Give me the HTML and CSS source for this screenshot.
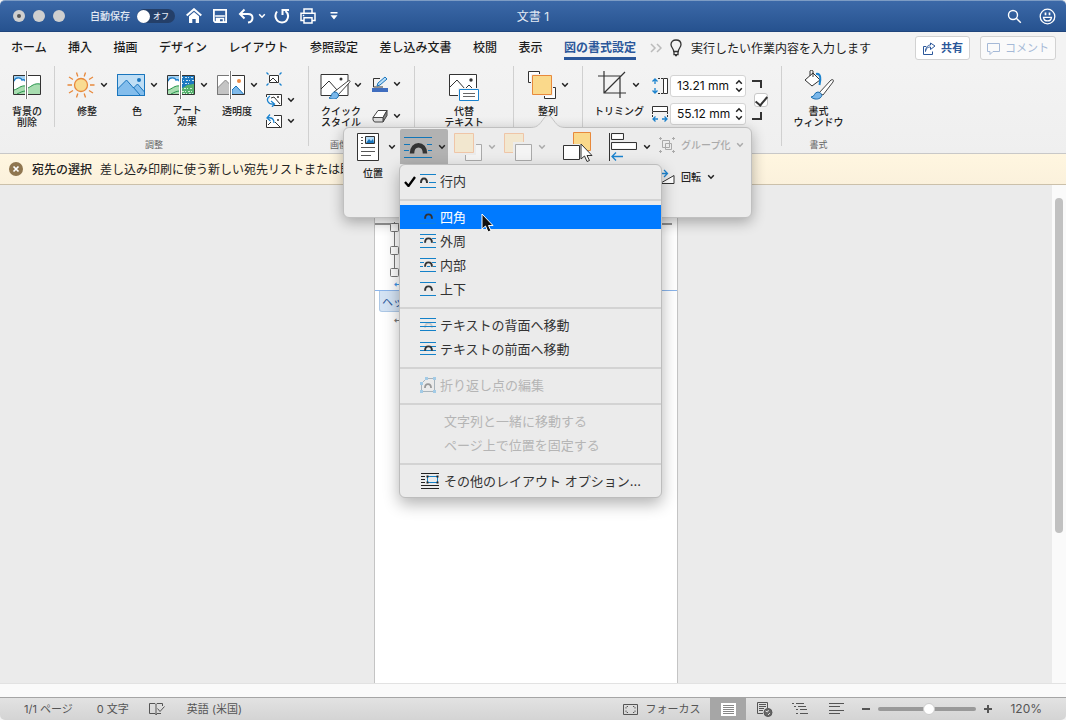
FILE: index.html
```html
<!DOCTYPE html>
<html lang="ja">
<head>
<meta charset="utf-8">
<title>文書 1</title>
<link rel="stylesheet" href="styles.css">
</head>
<body>
<svg class="defs" aria-hidden="true">
  <symbol id="chev" viewBox="0 0 8 6"><path d="M1.200 1.200 4 4.200 6.800 1.200" fill="none" stroke="currentColor" stroke-width="1.500"/></symbol>
  <symbol id="arch" viewBox="0 0 10 6"><path d="M1.200 6C1.200-.4 8.800-.4 8.800 6" fill="none" stroke="currentColor" stroke-width="2.200"/></symbol>
  <symbol id="scene" viewBox="0 0 28 28"><path d="M.5 4.500h27v19H.5z" fill="#fff"/><path d="M1 5h12v10H1z" fill="#a5d2f3"/><path d="M1 12c1-6 7-6 8-2 2-1 4 1 4 3v6H1z" fill="#fff"/><path d="M1 10c1-4 7-4 8-1 2-1 3 0 4 2" fill="none" stroke="#1f7fc9" stroke-width="1.300"/><path d="M1 19c4-1 7-5 12-4v9H1zM15 17c4-2 6-5 12-4v11H15z" fill="#a8ddb0"/><path d="M1 19c4-1 7-5 12-4M15 17c4-2 6-5 12-4M4 23c4-2 6-3 9-3" fill="none" stroke="#26944c"/></symbol>
</svg>

<header class="titlebar">
  <div class="lights"><button class="light edited" aria-label="閉じる"></button><button class="light" aria-label="しまう"></button><button class="light" aria-label="拡大"></button></div>
  <label class="autosave"><span>自動保存</span><span class="switch"><input type="checkbox" role="switch"><span class="knob"></span><span class="off">オフ</span></span></label>
  <div class="quick">
    <button aria-label="ホーム"><svg width="16" height="16" viewBox="0 0 16 16" fill="none" stroke="#fff"><path d="M.7 7.500 8 1.200 15.300 7.500" stroke-width="2"/><path d="M3 8.200 8 4l5 4.200V15H9.700v-4H6.300v4H3z" fill="#fff" stroke="none"/></svg></button>
    <button aria-label="保存"><svg width="16" height="16" viewBox="0 0 16 16" fill="none" stroke="#fff" stroke-width="1.800"><path d="M1.900 1.900h12.200v12.200H3.200L1.900 12.800z"/><path d="M3.200 8h9.600M4.500 14v-3.500h7V14" stroke-width="1.500"/><path d="M5 11h3v3H5z" fill="#fff" stroke="none"/></svg></button>
    <button aria-label="元に戻す" class="undo"><svg width="17" height="16" viewBox="0 0 17 16" fill="none" stroke="#fff" stroke-width="2"><path d="M6.500 1.500 2 6l4.500 4.500M2.500 6H10c6 0 6 7.500 0 8.500"/></svg><svg class="chev"><use href="#chev"/></svg></button>
    <button aria-label="やり直し"><svg width="16" height="16" viewBox="0 0 16 16" fill="none" stroke="#fff" stroke-width="2"><path d="M3 3.500C-.5 8 2.500 14.500 8 14.500S16.500 7 11.500 3M8.500 7V2H15"/></svg></button>
    <button aria-label="印刷"><svg width="16" height="16" viewBox="0 0 16 16" fill="none" stroke="#fff" stroke-width="1.500"><path d="M4 5V1h8v4M3.500 12.500H1V5.300h14v7.200h-2.500M4 9.800h8V15H4z"/><path d="M2.800 7.500h1.500"/></svg></button>
    <button aria-label="クイックアクセスのカスタマイズ"><svg width="8" height="8" viewBox="0 0 8 8" fill="#fff"><path d="M.5 0h7v1.500h-7zM.5 3.200h7L4 7.500z"/></svg></button>
  </div>
  <h1 class="doc-title">文書 1</h1>
  <div class="title-tools">
    <button aria-label="検索"><svg width="15" height="15" viewBox="0 0 15 15" fill="none" stroke="#fff" stroke-width="1.400"><circle cx="6" cy="6" r="4.500"/><path d="m9.300 9.300 4.500 4.500"/></svg></button>
    <button aria-label="フィードバック"><svg width="17" height="17" viewBox="0 0 17 17" fill="none" stroke="#fff" stroke-width="1.300"><circle cx="8.500" cy="8.500" r="7.300"/><path d="M4.500 9.300c.6 4.800 7.400 4.800 8 0z"/><path d="M6.500 4.500v2.800M10.500 4.500v2.800" stroke-width="1.700"/></svg></button>
  </div>
</header>

<nav class="tabs">
  <div class="tab-list">
    <button>ホーム</button><button>挿入</button><button>描画</button><button>デザイン</button><button>レイアウト</button><button>参照設定</button><button>差し込み文書</button><button>校閲</button><button>表示</button><button class="active">図の書式設定</button>
  </div>
  <svg width="12" height="10" viewBox="0 0 12 10" fill="none" stroke="#bbb" stroke-width="1.500"><path d="m1 1 4 4-4 4M7 1l4 4-4 4"/></svg>
  <button class="tell"><svg width="12" height="18" viewBox="0 0 12 18" fill="none" stroke="#333" stroke-width="1.300"><path d="M3.700 12.500C3.700 9.500 1 8.500 1 5.500 1 2.800 3 1 6 1s5 1.800 5 4.500c0 3-2.700 4-2.700 7zM4 12.500v3.200h4v-3.200M5 16.500h2"/></svg><span>実行したい作業内容を入力します</span></button>
  <div class="tab-actions">
    <button class="share"><svg width="14" height="13" viewBox="0 0 14 13" fill="none" stroke="currentColor"><path d="M4 4.500H1.500v8h9V9.500M3.500 9.500c.5-3.500 2.500-4.500 5-4.500V7.500L13 4 8.500 1v2C5.500 3 3.700 5.500 3.500 9.500z"/></svg>共有</button>
    <button class="comment" disabled><svg width="13" height="13" viewBox="0 0 13 13" fill="none" stroke="currentColor"><path d="M.5 1.500h12v8H6l-3 3v-3H.5z"/></svg>コメント</button>
  </div>
</nav>

<section class="ribbon" aria-label="図の書式設定">
  <div class="group adjust">
    <div class="tools">
      <button class="tool remove-bg"><span class="pic"><svg width="28" height="28" viewBox="0 0 28 28" fill="none"><use href="#scene"/><path d="M.5 4.500h27v19H.5z" stroke="#333"/><path d="M13.500 0v28" stroke="#fff" stroke-width="3"/><path d="M13.500 0v28" stroke="#777"/></svg></span><span>背景の<br>削除</span></button>
      <div class="adjust-set">
        <button class="tool"><span class="pic"><svg width="28" height="28" viewBox="0 0 28 28" fill="none" stroke="#e8893c" stroke-width="1.300"><circle cx="14" cy="14" r="6.500" fill="#f9dc92"/><path d="M9.500 1.500l1.300 4M18.500 1.500l-1.300 4M2 6l4 2.500M26 6l-4 2.500M.5 14H5M23 14h4.500M2 22l4-2.500M26 22l-4-2.500M9.500 26.500l1.300-4M18.500 26.500l-1.300-4"/></svg><svg class="chev"><use href="#chev"/></svg></span><span>修整</span></button>
        <button class="tool"><span class="pic"><svg width="28" height="22" viewBox="0 0 28 22" fill="none" stroke="#1975bd"><path d="M.5.500h27v21H.5z" fill="#bfdef5"/><path d="m.5 15 9-9 7 8 4-4 7 8v3.500H.5z" fill="#83bdec"/><path d="m16 13 7 8"/><circle cx="22" cy="6" r="2" fill="#1975bd" stroke="none"/><path d="M.5.500h27v21H.5z"/></svg><svg class="chev"><use href="#chev"/></svg></span><span>色</span></button>
        <button class="tool"><span class="pic"><svg width="28" height="28" viewBox="0 0 28 28" fill="none"><use href="#scene"/><path d="M15 4h12v9l-12 4z" fill="#1c79c0"/><path d="M15 6.500h12M16 9.500h11M15 12.500h8" stroke="#cfe6f7" stroke-dasharray="1 2 2 1"/><path d="M15 18l5-4 7-1v11H15z" fill="#55b06c"/><path d="M17 17.500h9M15 20.500h12M16 22.500h11" stroke="#d2efd8" stroke-dasharray="2 1 1 2"/><path d="M.5 4.500h27v19H.5z" stroke="#333"/><path d="M13.500 0v28" stroke="#fff" stroke-width="3"/><path d="M13.500 0v28" stroke="#777"/></svg><svg class="chev"><use href="#chev"/></svg></span><span>アート<br>効果</span></button>
        <button class="tool"><span class="pic"><svg width="28" height="28" viewBox="0 0 28 28" fill="none"><path d="M.5 4.500h27v19H.5z" fill="#fff"/><path d="m.5 17 8-8 5 5v9.500H.5z" fill="#c4c4c4" stroke="#888"/><path d="M15 19l4-4 8 8.500H15z" fill="#7fb9e9" stroke="#1975bd"/><circle cx="22" cy="10" r="2" fill="#ed8b45"/><path d="M13 4.500H.5v19H13" stroke="#777"/><path d="M14 4.500h13.500v19H14" stroke="#333"/><path d="M13.500 0v28" stroke="#fff" stroke-width="3"/><path d="M13.500 0v28" stroke="#777"/></svg><svg class="chev"><use href="#chev"/></svg></span><span>透明度</span></button>
        <div class="minis three">
          <button aria-label="図の圧縮"><svg width="16" height="14" viewBox="0 0 16 14" fill="none"><path d="M3.500 3.500h9v7h-9z" fill="#fff" stroke="#333"/><path d="m4 9 3-3 4 4" stroke="#333"/><path d="m.5.500 2 2M15.500.500l-2 2M.5 13.500l2-2M15.500 13.500l-2-2" stroke="#1b83cf" stroke-width="1.300"/></svg></button>
          <button aria-label="図の変更"><svg width="16" height="14" viewBox="0 0 16 14" fill="none"><path d="M.5 1.500h15v11H.5z" fill="#fff" stroke="#333"/><path d="m5 5 3-1 6 7" stroke="#333"/><circle cx="12" cy="4" r="1" fill="#333"/><path d="M0 4h4v10H0zM3 10h5v4H3z" fill="#f2f2f2"/><path d="M4 3C-1 6 2 12 8 11M5 8l3.500 3L6 14" stroke="#1b83cf" stroke-width="1.300"/></svg><svg class="chev"><use href="#chev"/></svg></button>
          <button aria-label="図のリセット"><svg width="16" height="14" viewBox="0 0 16 14" fill="none"><path d="M.5 1.500h15v12H.5z" fill="#fff" stroke="#333"/><path d="m2 11 3-3m4 0 5 5" stroke="#333"/><circle cx="12" cy="6" r="1" fill="#333"/><path d="M0 0h8v6H0z" fill="#f2f2f2"/><path d="M4 .5 1 4l3.500 3M1 4c5-1 7 1 7 5" stroke="#1b83cf" stroke-width="1.300"/></svg><svg class="chev"><use href="#chev"/></svg></button>
        </div>
      </div>
    </div>
    <div class="caption">調整</div>
  </div>
  <div class="group styles">
    <div class="tools">
      <button class="tool"><span class="pic"><svg width="31" height="28" viewBox="0 0 31 28" fill="none"><path d="M1 3.500h27v21H1z" fill="#fff" stroke="#333"/><path d="m1 18 8-8 8 9" stroke="#333"/><circle cx="21" cy="8" r="1.500" fill="#333"/><path d="m14 21 14-11c2-1 3 0 1 2L18 24z" fill="#fff" stroke="#444"/><path d="M9 27c3-1 2-6 6-6 3 0 5 4 2 6-2 2-6 1-8 0z" fill="#7ab7ea" stroke="#176cae"/></svg><svg class="chev"><use href="#chev"/></svg></span><span>クイック<br>スタイル</span></button>
      <div class="minis two">
        <button aria-label="図の枠線"><svg width="16" height="16" viewBox="0 0 16 16" fill="none"><path d="M11 11H1.500V2.500H8" stroke="#333"/><path d="m5 10 1-3 7-6 2 2-7 6z" fill="#b9ddf7" stroke="#1975bd"/><path d="M0 12h16v4H0z" fill="#3f6dbf"/></svg><svg class="chev"><use href="#chev"/></svg></button>
        <button aria-label="図の効果"><svg width="16" height="14" viewBox="0 0 16 14" fill="#fff" stroke="#444" stroke-linejoin="round"><path d="M6 1.500h9l-4 7H1z"/><path d="m11 8.500 4-7v5l-4 6.500z" fill="#888"/><path d="M1 8.500h10V13H2.500L1 11z" fill="#ddd"/></svg><svg class="chev"><use href="#chev"/></svg></button>
      </div>
    </div>
    <div class="caption">画像のスタイル</div>
  </div>
  <div class="group alt">
    <div class="tools"><button class="tool"><span class="pic"><svg width="30" height="32" viewBox="0 0 30 32" fill="none"><path d="M.5 5.500h27v21H.5z" fill="#fff" stroke="#333"/><path d="m1 18 7-7 8 9 4-4 4 4" stroke="#333"/><circle cx="22" cy="11" r="1.700" fill="#333"/><path d="M9 19h21v13H9z" fill="#f2f2f2"/><path d="M10.500 20.500h19v11h-19z" fill="#fff" stroke="#1b83cf"/><path d="M14 24.500h12M14 27.500h12" stroke="#666"/></svg></span><span>代替<br>テキスト</span></button></div>
  </div>
  <div class="group arrange">
    <div class="tools"><button class="tool" aria-expanded="true"><span class="pic"><svg width="28" height="28" viewBox="0 0 28 28"><path d="M.5.500h11v11H.5zM16.500 16.500h11v11h-11z" fill="#fff" stroke="#333"/><path d="M3 3h22v22H3z" fill="#f2f2f2"/><path d="M4.500 4.500h19v19h-19z" fill="#fad98b" stroke="#e8893c"/></svg><svg class="chev"><use href="#chev"/></svg></span><span>整列</span></button></div>
  </div>
  <div class="group size">
    <div class="tools">
      <button class="tool"><span class="pic"><svg width="28" height="28" viewBox="0 0 28 28" fill="none" stroke="#333" stroke-width="1.200"><path d="M6 0v22h22M0 5h22v22M6 22 27 1"/></svg><svg class="chev"><use href="#chev"/></svg></span><span>トリミング</span></button>
      <div class="dims">
        <div class="dim"><svg width="17" height="16" viewBox="0 0 17 16" fill="none"><path d="M11.500.500h4v15h-4z" fill="#fff" stroke="#333"/><path d="M6 .5h5M6 15.500h5" stroke="#333" stroke-dasharray="2 1"/><path d="M3 1v5M3 10v5M.5 3.500 3 1l2.500 2.500M.5 12.500 3 15l2.500-2.500" stroke="#1b83cf" stroke-width="1.300"/></svg><span class="field"><input type="text" value="13.21 mm" aria-label="高さ"><span class="steps"><button aria-label="増やす"><svg class="chev up"><use href="#chev"/></svg></button><button aria-label="減らす"><svg class="chev"><use href="#chev"/></svg></button></span></span></div>
        <div class="dim"><svg width="17" height="16" viewBox="0 0 17 16" fill="none"><path d="M.5.500h15v5H.5z" fill="#fff" stroke="#333"/><path d="M.5 6v5M15.500 6v5" stroke="#333" stroke-dasharray="2 1"/><path d="M1 13h5M10 13h5M3.500 10.500 1 13l2.500 2.500M12.500 10.500 15 13l-2.500 2.500" stroke="#1b83cf" stroke-width="1.300"/></svg><span class="field"><input type="text" value="55.12 mm" aria-label="幅"><span class="steps"><button aria-label="増やす"><svg class="chev up"><use href="#chev"/></svg></button><button aria-label="減らす"><svg class="chev"><use href="#chev"/></svg></button></span></span></div>
      </div>
      <div class="lock"><svg width="10" height="8" viewBox="0 0 10 8" fill="none" stroke="#333" stroke-width="2"><path d="M0 1h9v7"/></svg><input type="checkbox" checked aria-label="縦横比の固定"><svg width="10" height="8" viewBox="0 0 10 8" fill="none" stroke="#333" stroke-width="2"><path d="M0 7h9V0"/></svg></div>
    </div>
  </div>
  <div class="group format">
    <div class="tools"><button class="tool"><span class="pic"><svg width="30" height="30" viewBox="0 0 30 30" fill="none"><path d="m1 10 8-7 7 7-8 6z" fill="#fff" stroke="#333"/><path d="M6 6V1c0-1 3-1 3 0v6" stroke="#333"/><path d="M12 4c5-1 5 5 3.500 11" stroke="#1b83cf" stroke-width="2"/><path d="m15 23 12-13c2-1 3 0 2 2L19 25z" fill="#fff" stroke="#444"/><path d="M7 27c4 0 3-5 7-5 4 1 5 4 2 6-3 2-7 1-9-1z" fill="#7ab7ea" stroke="#176cae"/></svg></span><span>書式<br>ウィンドウ</span></button></div>
    <div class="caption">書式</div>
  </div>

  <div class="popover">
    <svg class="peak" width="34" height="13" viewBox="0 0 34 13"><path d="M0 12.500c7 0 9-4 12-8 3-5 7-5 10 0 3 4 5 8 12 8v.5H0z" fill="#ececec"/><path d="M0 12.500c7 0 9-4 12-8 3-5 7-5 10 0 3 4 5 8 12 8" fill="none" stroke="#c4c4c4"/></svg>
    <div class="position"><button class="pop-tool" aria-label="オブジェクトの位置"><svg width="22" height="28" viewBox="0 0 22 28" fill="none"><path d="M.5.500h21v27H.5z" fill="#fff" stroke="#333"/><path d="M8.500 3.500h9v7h-9z" fill="#b7dcf7" stroke="#333"/><path d="m9 10 3-4 2 2 2-2 1 4z" fill="#1975bd"/><path d="M4 4.500h2M4 7.500h2M4 10.500h2M4 14.500h14M4 18.500h14M4 22.500h10" stroke="#555"/></svg><svg class="chev"><use href="#chev"/></svg></button><span>位置</span></div>
    <div class="wrap">
      <button class="pop-tool pressed" aria-label="文字列の折り返し" aria-expanded="true"><svg width="28" height="24" viewBox="0 0 28 24" fill="none"><path d="M0 2.500h28M0 9.500h6M23 9.500h5M0 15.500h5M24 15.500h4M0 22.500h28" stroke="#1176b9"/><path d="M8 18.500c0-11 13-11 13 0" stroke="#333" stroke-width="4.500"/></svg><svg class="chev"><use href="#chev"/></svg></button>
      <div class="menu" role="menu">
        <button role="menuitem"><svg class="tick" width="12" height="11" viewBox="0 0 12 11" fill="none" stroke="#000" stroke-width="2.300"><path d="m1 6 3.500 4L11 1"/></svg><svg width="16" height="14" viewBox="0 0 16 14"><path d="M0 .5h16M9 8.500h7M0 13.500h16" stroke="#1481c8"/><path d="M1 9c0-6 6-6 6 0" fill="none" stroke="#333" stroke-width="2"/></svg>行内</button>
        <hr>
        <button role="menuitem" class="selected"><svg width="16" height="14" viewBox="0 0 16 14"><path d="M0 .5h16M0 4.500h2M14 4.500h2M0 8.500h2M14 8.500h2M0 13.500h16" stroke="#0f80e0"/><use href="#arch" x="4" y="3" width="9" height="6"/></svg>四角</button>
        <button role="menuitem"><svg width="16" height="14" viewBox="0 0 16 14"><path d="M0 .5h16M0 4.500h4M12 4.500h4M0 8.500h3M13 8.500h3M0 13.500h16" stroke="#1481c8"/><use href="#arch" x="4" y="3" width="9" height="6"/></svg>外周</button>
        <button role="menuitem"><svg width="16" height="14" viewBox="0 0 16 14"><path d="M0 .5h16M0 4.500h4M12 4.500h4M0 8.500h3M7 8.500h3M13 8.500h3M0 13.500h16" stroke="#1481c8"/><use href="#arch" x="4" y="3" width="9" height="6"/></svg>内部</button>
        <button role="menuitem"><svg width="16" height="14" viewBox="0 0 16 14"><path d="M0 .5h16M0 13.500h16" stroke="#1481c8"/><use href="#arch" x="4" y="3" width="9" height="6"/></svg>上下</button>
        <hr>
        <button role="menuitem"><svg width="16" height="14" viewBox="0 0 16 14"><use href="#arch" x="4" y="4" width="9" height="6" color="#c8c8c8"/><path d="M0 .5h16M0 4.500h16M0 8.500h16M0 12.500h16" stroke="#1481c8"/></svg>テキストの背面へ移動</button>
        <button role="menuitem"><svg width="16" height="14" viewBox="0 0 16 14"><path d="M0 .5h16M0 4.500h16M0 8.500h16M0 12.500h16" stroke="#1481c8"/><use href="#arch" x="4" y="3" width="9" height="6"/></svg>テキストの前面へ移動</button>
        <hr>
        <button role="menuitem" disabled><svg width="16" height="16" viewBox="0 0 16 16"><path d="M6.500 1.500h8v13h-13v-8z" fill="none" stroke="#a8b4bc"/><path d="M5 0h3v3H5zM13 0h3v3h-3zM0 5h3v3H0zM0 13h3v3H0zM13 13h3v3h-3z" fill="#a3cbe6"/><use href="#arch" x="4" y="6" width="8" height="5" color="#999"/></svg>折り返し点の編集</button>
        <hr>
        <button role="menuitem" class="inset" disabled>文字列と一緒に移動する</button>
        <button role="menuitem" class="inset" disabled>ページ上で位置を固定する</button>
        <hr>
        <button role="menuitem"><svg width="20" height="17" viewBox="0 0 20 17" fill="none"><path d="M1 .5h18M1 3.500h4M1 6.500h4M1 9.500h4M1 12.500h18M1 15.500h18" stroke="#222"/><path d="M7.500 3.500h10v6h-10z" stroke="#1481c8"/><path d="M6.500 2.500h2v2h-2zM16.500 2.500h2v2h-2zM6.500 8.500h2v2h-2zM16.500 8.500h2v2h-2z" fill="#222"/></svg>その他のレイアウト オプション...</button>
      </div>
    </div>
    <button class="pop-tool" disabled aria-label="前面へ移動"><svg width="28" height="28" viewBox="0 0 28 28"><path d="M11.500 11.500h16v16h-16z" fill="#f4f4f4" stroke="#aaa"/><path d="M0 0h22v22H0z" fill="#ececec"/><path d="M.5.500h19v19H.5z" fill="#f2e7cf" stroke="#efc5a7"/></svg><svg class="chev"><use href="#chev"/></svg></button>
    <button class="pop-tool" disabled aria-label="背面へ移動"><svg width="28" height="28" viewBox="0 0 28 28"><path d="M.5.500h19v19H.5z" fill="#f2e7cf" stroke="#efc5a7"/><path d="M9 9h19v19H9z" fill="#ececec"/><path d="M11.500 11.500h16v16h-16z" fill="#f4f4f4" stroke="#aaa"/></svg><svg class="chev"><use href="#chev"/></svg></button>
    <button class="pop-tool pane" aria-label="オブジェクトの選択"><svg width="30" height="30" viewBox="0 0 30 30"><path d="M10.500.500h17v18h-17z" fill="#fad98b" stroke="#e8893c"/><path d="M0 12h18v16H0z" fill="#ececec"/><path d="M.5 13.500h16v14H.5z" fill="#fff" stroke="#333"/><path d="M18 12v15l3.500-3 2.500 5.500 2.500-1-2.500-5h5z" fill="#fff" stroke="#333"/></svg></button>
    <button class="pop-tool align" aria-label="配置"><svg width="28" height="28" viewBox="0 0 28 28" fill="none"><path d="M.5 0v28M2.500.500h12v6h-12zM2.500 9.500h25v7h-25z" stroke="#333"/><path d="M3.500 1.500h10v4h-10zM3.500 10.500h23v5h-23z" fill="#fff"/><path d="M3 23.500h11M7 19.500l-4 4 4 4" stroke="#1b83cf" stroke-width="1.300"/></svg><svg class="chev"><use href="#chev"/></svg></button>
    <div class="pop-rows">
      <button disabled><svg width="16" height="16" viewBox="0 0 16 16" fill="none" stroke="#aaa"><path d="M3.500 3.500h7v7h-7zM6.500 6.500h6v6h-6z"/><path d="M0 1.500h3M1.500 0v3M13 1.500h3M14.500 0v3M0 14.500h3M1.500 13v3M13 14.500h3M14.500 13v3"/></svg>グループ化<svg class="chev"><use href="#chev"/></svg></button>
      <button><svg width="16" height="16" viewBox="0 0 16 16" fill="none"><path d="m1 14.500 14-8v8z" fill="#fff" stroke="#333"/><path d="M1 9V4.500h7M5 1 8.500 4.500 5 8" stroke="#1b83cf" stroke-width="1.300"/></svg>回転<svg class="chev"><use href="#chev"/></svg></button>
    </div>
  </div>
</section>

<div class="notice"><button aria-label="閉じる"><svg width="14" height="14" viewBox="0 0 14 14"><circle cx="7" cy="7" r="7" fill="#8f7650"/><path d="m4.500 4.500 5 5m0-5-5 5" stroke="#fff" stroke-width="1.700"/></svg></button><strong>宛先の選択</strong><span>差し込み印刷に使う新しい宛先リストまたは既存の宛先リストを選択します</span></div>

<main class="workspace">
  <div class="canvas"><article class="page">
    <div class="picture"><svg width="302" height="56" viewBox="0 0 302 56" fill="none"><path d="M0 2h297" stroke="#777" stroke-width="1.500"/><path d="M19.500 0v50M20 5.500h10M20 50.500h10" stroke="#777"/><g fill="#fff" stroke="#777"><rect x="15.500" y="1.500" width="8" height="8" rx="1"/><rect x="15.500" y="24.500" width="8" height="8" rx="1"/><rect x="15.500" y="46.500" width="8" height="8" rx="1"/></g></svg></div>
    <div class="mark blue">↵</div>
    <div class="header-line"><span class="header-tag">ヘッダー</span></div>
    <div class="mark">↵</div>
  </article></div>
  <div class="scroll"><div class="thumb"></div></div>
</main>
<div class="hscroll"></div>

<footer class="status">
  <span class="pages">1/1 ページ</span><span class="chars">0 文字</span>
  <button aria-label="スペルチェック"><svg width="16" height="14" viewBox="0 0 16 14" fill="none" stroke="#555"><path d="M7 12.500 6 11.500H.5v-10H6l1 1 1-1h5.500V4M7 2.500V13l1-1.500h4M8.500 6.500l2.500 3 4.500-5"/></svg></button>
  <span class="lang">英語 (米国)</span>
  <div class="views">
    <button class="focus"><svg width="15" height="11" viewBox="0 0 15 11" fill="none" stroke="#555"><path d="M.5.500h14v10H.5zM3 4.500v-1l1-1h1M10 2.500h1l1 1v1M3 6.500v1l1 1h1M10 8.500h1l1-1v-1"/></svg>フォーカス</button>
    <button class="view on" aria-label="印刷レイアウト"><svg width="15" height="13" viewBox="0 0 15 13"><path d="M0 0h15v13H0z" fill="#fff"/><path d="M2 2.500h11M2 4.500h11M2 6.500h11M2 8.500h11M2 10.500h11" stroke="#888"/></svg></button>
    <button class="view" aria-label="Webレイアウト"><svg width="17" height="15" viewBox="0 0 17 15" fill="none" stroke="#555"><path d="M7 11.500H1.500V.500h10V6M3 2.500h7M3 4.500h7M3 6.500h5M3 8.500h4"/><circle cx="12" cy="10.500" r="4" fill="#666"/><path d="m9.500 9 2 1 1-2M12 13l2-2" stroke="#ddd"/></svg></button>
    <button class="view" aria-label="アウトライン"><svg width="16" height="12" viewBox="0 0 16 12" stroke="#555"><path d="M0 .5h2M4 .5h8M2 3.500h2M6 3.500h8M4 6.500h2M8 6.500h7M4 10.500h2M8 10.500h8"/></svg></button>
    <button class="view" aria-label="下書き"><svg width="15" height="12" viewBox="0 0 15 12" stroke="#555"><path d="M0 .5h15M0 3.500h11M0 7.500h15M0 10.500h11"/></svg></button>
    <button aria-label="縮小"><svg width="8" height="8" viewBox="0 0 8 8" stroke="#555" stroke-width="2"><path d="M0 4h8"/></svg></button>
    <input type="range" min="10" max="230" value="125" aria-label="ズーム">
    <button aria-label="拡大"><svg width="8" height="8" viewBox="0 0 8 8" stroke="#555" stroke-width="2"><path d="M0 4h8M4 0v8"/></svg></button>
    <button class="zoom">120%</button>
  </div>
</footer>

<svg class="cursor" width="13" height="20" viewBox="0 0 13 20"><path d="M1 1v15l3.500-3 2.500 6 3-1.300-2.500-5.200H12z" fill="#111" stroke="#fff"/></svg>
</body>
</html>
```

FILE: styles.css
```css
* { box-sizing: border-box; }
body {
  margin: 0;
  min-height: 100vh;
  display: flex;
  flex-direction: column;
  position: relative;
  background: #f3f3f3;
  color: #222;
  font-family: Inter, "Noto Sans CJK JP", sans-serif;
  font-size: 12px;
  line-height: 16px;
  white-space: nowrap;
  overflow: hidden;
}
button {
  font: inherit;
  color: inherit;
  background: none;
  border: 0;
  padding: 0;
  display: flex;
  align-items: center;
}
svg { flex: none; display: block; }
.defs { position: absolute; width: 0; height: 0; }
.chev { width: 8px; height: 6px; }
.chev.up { transform: rotate(180deg); }

.titlebar {
  height: 32px;
  display: grid;
  grid-template-columns: auto auto auto 1fr;
  align-items: center;
  padding: 0 10px 0 13px;
  position: relative;
  color: #fff;
  background: linear-gradient(#3c69a8, #26528f);
  border-top: 1px solid #7d9cc4;
  border-bottom: 1px solid #20457c;
  border-radius: 5px 5px 0 0;
}
.lights { display: flex; gap: 8px; }
.light { width: 12px; height: 12px; border-radius: 50%; background: #cfcfcf; justify-content: center; }
.edited::after { content: ""; width: 4px; height: 4px; border-radius: 50%; background: #555; }
.autosave { display: flex; align-items: center; gap: 7px; margin-left: 25px; font-size: 10px; font-weight: 500; color: #e3eaf4; }
.switch { width: 38px; height: 14px; border-radius: 7px; background: #243f69; display: flex; align-items: center; gap: 3px; }
.switch input { position: absolute; opacity: 0; margin: 0; }
.knob { width: 13px; height: 13px; border-radius: 50%; background: #fff; }
.off { font-size: 8px; }
.quick { display: flex; align-items: center; gap: 10px; margin-left: 11px; }
.quick .undo { gap: 3px; margin-right: -2px; }
.quick button:last-child { margin-left: 4px; }
.doc-title { position: absolute; left: 0; right: 0; margin: 0; padding-top: 2px; text-align: center; font-size: 12px; font-weight: 400; color: #e3eaf4; pointer-events: none; }
.title-tools { display: flex; gap: 17px; justify-content: flex-end; }

.tabs { height: 32px; display: flex; align-items: center; padding: 0 10px 0 11px; color: #1c1c1c; }
.tab-list { display: flex; justify-content: space-between; width: 625px; margin-right: 14px; }
.tab-list button { height: 24px; font-weight: 500; border-bottom: 3px solid transparent; border-top: 3px solid transparent; }
.tab-list .active { color: #2b579a; border-bottom-color: #2b579a; font-weight: 700; }
.tell { gap: 9px; margin-left: 8px; }
.tell span { padding-top: 1px; }
.tab-actions { display: flex; gap: 10px; margin-left: auto; }
.tab-actions button { height: 24px; padding: 0 6px; gap: 5px; font-size: 11px; border: 1px solid #d2d2d2; border-radius: 3px; background: #fff; color: #2b579a; }
.tab-actions .share { font-weight: 700; }
.tab-actions .comment { color: #a5b9d7; background: #fafafa; }

.ribbon { height: 90px; display: flex; align-items: flex-start; position: relative; border-bottom: 1px solid #c8c8c8; background: linear-gradient(#f3f3f3, #efefef); padding-top: 2px; }
.group { height: 80px; display: flex; flex-direction: column; border-right: 1px solid #d0d0d0; }
.tools { display: flex; flex: 1; align-items: flex-start; }
.caption { text-align: center; font-size: 9px; line-height: 12px; color: #666; margin-bottom: -5px; }
.tool { flex-direction: column; width: 50px; font-size: 10px; line-height: 11px; font-weight: 500; padding-top: 2px; text-align: center; color: #222; }
.pic { height: 34px; display: flex; align-items: center; gap: 5px; margin-bottom: 4px; }
.remove-bg { width: 54px; }
.adjust-set { display: flex; border-left: 1px solid #d0d0d0; padding: 0 13px 0 7px; height: 61px; }
.minis { display: flex; flex-direction: column; padding-top: 2px; }
.minis button { gap: 5px; flex: none; }
.three { margin-left: 4px; }
.three button { height: 21px; }
.two { margin-left: 6px; }
.two button { height: 32px; }
.styles { width: 106px; }
.styles .tools { padding: 0 13px 0 7px; }
.styles .pic { gap: 3px; }
.alt { width: 99px; }
.alt .tools, .arrange .tools { justify-content: center; }
.arrange { width: 69px; }
.size { width: 199px; }
.size .tools { padding-left: 11px; }
.size .pic { gap: 6px; }
.dims { display: flex; flex-direction: column; gap: 6px; padding: 9px 0 0 8px; }
.dim { display: flex; align-items: center; gap: 1px; }
.field { display: flex; width: 76px; height: 22px; background: #fff; border: 1px solid #d4d4d4; border-radius: 3px; }
.field input { flex: 1; min-width: 0; border: 0; background: none; padding: 0 0 0 6px; font: inherit; color: #111; }
.steps { display: flex; flex-direction: column; justify-content: space-between; padding: 3px 2px; }
.lock { padding: 14px 0 0 6px; display: flex; flex-direction: column; gap: 5px; }
.lock input { appearance: none; width: 14px; height: 14px; margin: 0 0 0 2px; border: 1px solid #c8c8c8; border-radius: 3px; background: #fff; display: grid; place-items: center; }
.lock input::after { content: ""; width: 5px; height: 10px; border: solid #333; border-width: 0 2px 2px 0; transform: rotate(40deg); }
.format { width: 73px; border-right: 0; }
.format .tools { justify-content: center; }

.popover { position: absolute; left: 343px; top: 63px; width: 409px; height: 91px; background: #ececec; border: 1px solid #c0c0c0; border-radius: 6px; box-shadow: 0 4px 14px rgba(0, 0, 0, .3); display: flex; align-items: flex-start; padding: 1px 0 0 9px; z-index: 2; }
.peak { position: absolute; left: 187px; top: -13px; }
.pop-tool { height: 35px; width: 50px; gap: 6px; padding-left: 4px; }
.pop-tool:disabled, .pop-rows :disabled { color: #aaa; }
.position { width: 47px; font-size: 10px; font-weight: 500; }
.position .pop-tool { width: 47px; gap: 9px; }
.position span { display: block; padding: 1px 0 0 10px; }
.wrap { position: relative; margin-right: 2px; }
.wrap .pop-tool { width: 48px; }
.pressed { background: #b2b2b2; border-radius: 2px 2px 0 0; }
.pane { margin-left: 9px; width: 46px; }
.pop-rows { display: flex; flex-direction: column; font-size: 10px; font-weight: 500; margin-left: 4px; }
.pop-rows button { height: 32px; gap: 6px; }

.menu { position: absolute; left: -1px; top: 35px; width: 263px; padding: 4px 0; background: #ebebeb; border: 1px solid #bdbdbd; border-radius: 6px; box-shadow: 0 6px 16px rgba(0, 0, 0, .3); }
.menu button { position: relative; width: 100%; height: 24px; padding-left: 20px; gap: 4px; font-size: 13px; color: #333; }
.menu button:disabled { color: #b5b5b5; }
.menu .selected { background: #007aff; color: #fff; }
.selected use { color: #333; }
.menu .tick { position: absolute; left: 4px; }
.menu .inset { padding-left: 44px; }
.menu hr { height: 2px; border: 0; background: #d3d3d3; margin: 6px 0 4px; }

.notice { height: 31px; display: flex; align-items: center; padding-left: 9px; background: linear-gradient(#fff6e0, #fbf1dc); border-bottom: 1px solid #cbc0aa; }
.notice strong { font-weight: 500; margin: 0 8px 0 9px; padding-top: 2px; }
.notice span { padding-top: 2px; }

.workspace { flex: 1; display: flex; background: #ebebeb; }
.canvas { flex: 1; display: flex; justify-content: center; }
.page { width: 304px; background: #fff; border: solid #c4c4c4; border-width: 0 1px; padding-top: 37px; overflow: hidden; }
.mark { font-size: 11px; line-height: 12px; padding-left: 18px; color: #777; }
.blue { color: #3f95e8; }
.header-line { border-top: 1px solid #8ab4ea; padding-left: 4px; margin-bottom: 2px; }
.header-tag { display: inline-block; height: 21px; padding: 3px 6px 0 2px; background: #d4e3f4; border: 1px solid #adc8e6; border-top: 0; border-radius: 0 0 3px 3px; color: #2b579a; font-size: 11px; }
.scroll { width: 14px; background: #fafafa; padding: 13px 3px 0; }
.thumb { height: 69%; border-radius: 4px; background: #c1c1c1; }
.hscroll { height: 14px; background: #fafafa; border-top: 1px solid #e2e2e2; }

.status { height: 23px; display: flex; align-items: center; padding-left: 24px; border-top: 1px solid #a5a5a5; background: linear-gradient(#e2e2e2, #d4d4d4); color: #555; font-size: 11px; border-radius: 0 0 5px 5px; }
.pages { margin-right: 24px; }
.chars { margin-right: 20px; }
.lang { margin-left: 22px; }
.views { display: flex; align-items: center; margin-left: auto; height: 100%; padding-right: 24px; }
.focus { gap: 7px; margin-right: 10px; }
.view { width: 36px; height: 22px; justify-content: center; }
.on { background: #a6a6a6; }
.views input { appearance: none; width: 98px; height: 4px; margin: 0 8px; border-radius: 2px; background: #999; }
.views input::-webkit-slider-thumb { appearance: none; width: 12px; height: 12px; border-radius: 50%; background: #fff; border: 1px solid #ccc; }
.view + button:not(.view) { margin-left: 8px; }
.zoom { margin-left: 18px; font-size: 12px; }
.cursor { position: absolute; left: 481px; top: 213px; z-index: 5; }
```
